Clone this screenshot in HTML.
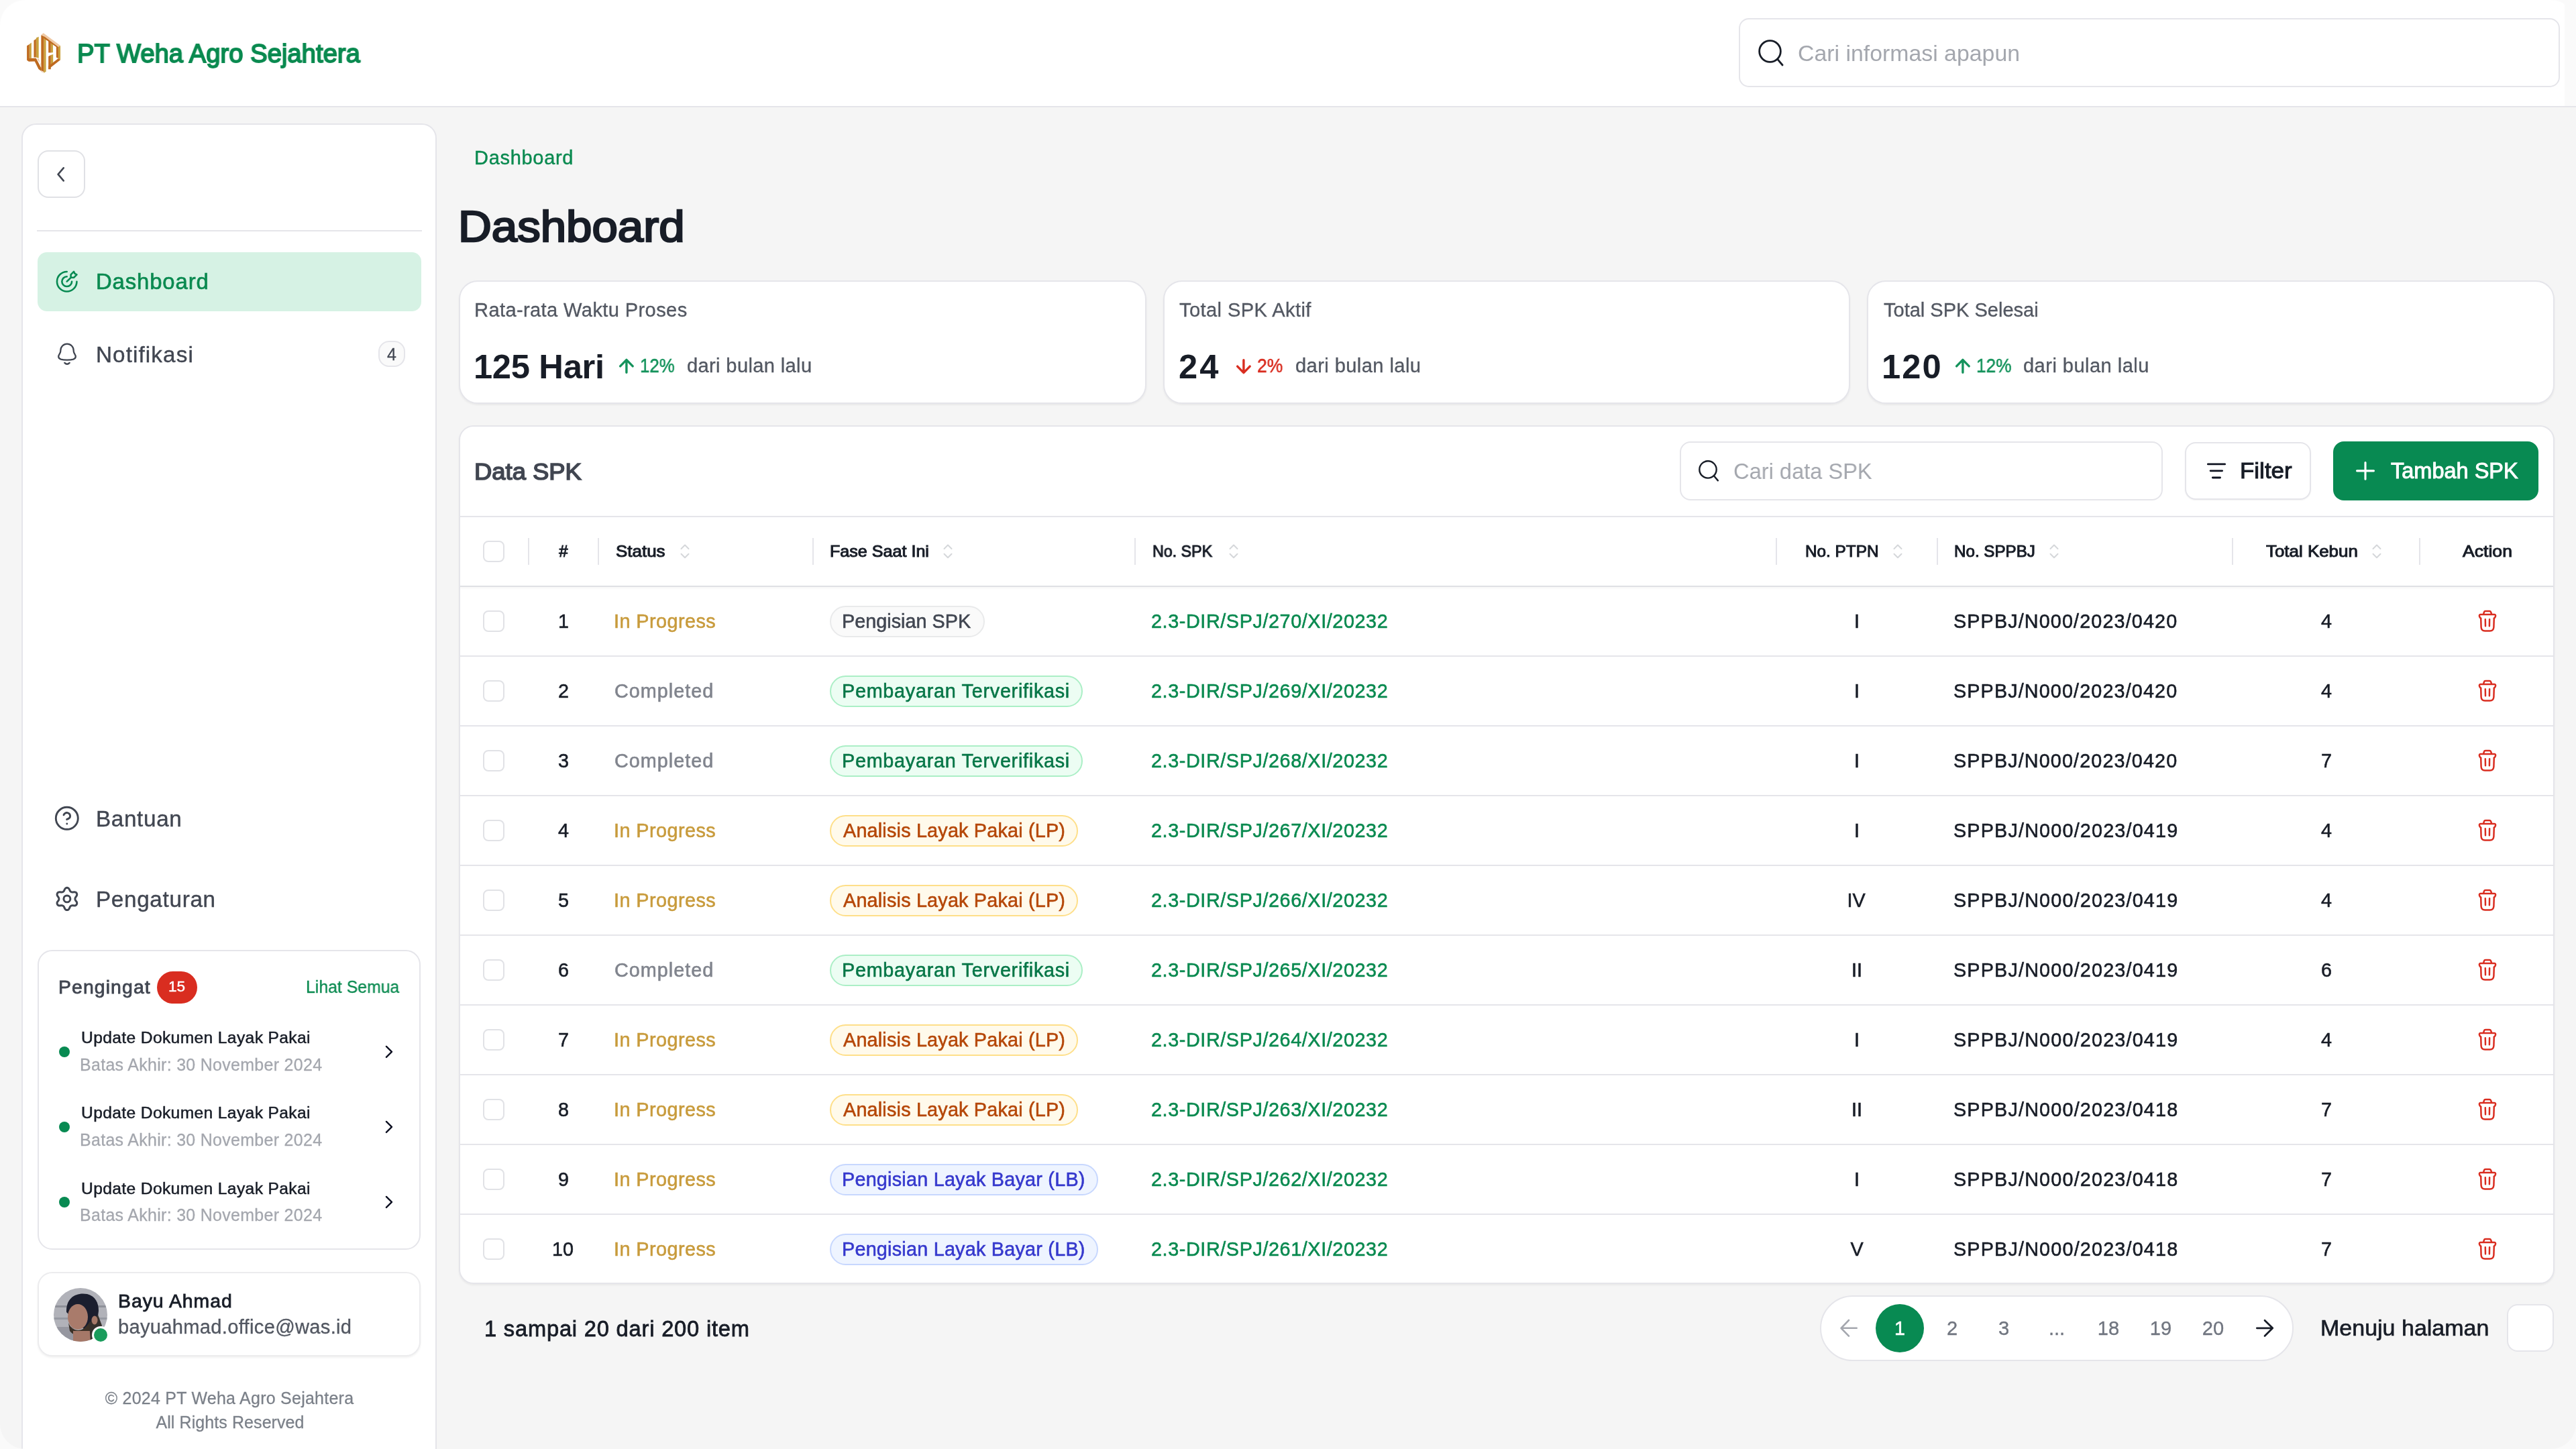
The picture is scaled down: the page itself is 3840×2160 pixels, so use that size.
<!DOCTYPE html>
<html><head><meta charset="utf-8"><title>Dashboard</title>
<style>
html,body{margin:0;padding:0;}
body{width:3840px;height:2160px;overflow:hidden;position:relative;background:#f5f5f5;font-family:"Liberation Sans", sans-serif;}
.t{position:absolute;white-space:nowrap;font-family:"Liberation Sans", sans-serif;will-change:transform;}
.b{position:absolute;box-sizing:border-box;}
.i{position:absolute;overflow:visible;}
</style></head><body>
<div class="b" style="left:0.00px;top:0.00px;width:3840.00px;height:160.00px;background:#fff;border-bottom:2px solid #e5e5ea;"></div>
<svg class="i" style="left:30.00px;top:40.00px;width:70.00px;height:75.00px;" viewBox="0 0 1352 1449" fill="none">
<g fill="#c9a13c">
<polygon points="265,500 325,455 325,905 265,905"/>
<polygon points="460,320 535,285 535,905 460,880"/>
<polygon points="680,290 745,320 745,1290 680,1330"/>
<polygon points="1100,545 1160,545 1160,950 1100,910"/>
<polygon points="885,440 945,480 945,740 885,745"/>
<polygon points="885,810 950,790 950,1050 885,1090"/>
</g>
<g fill="#bf6a1f">
<polygon points="195,545 265,500 265,905 460,905 610,1195 610,1290 680,1330 530,1215 420,995 250,1000 195,960"/>
<polygon points="395,390 460,350 460,880 395,880"/>
<polygon points="605,235 680,270 680,1300 605,1250"/>
<polygon points="680,265 745,290 1040,500 1100,580 1040,580 745,370 680,330"/>
<polygon points="1040,520 1100,580 1100,910 1040,880"/>
<polygon points="815,1130 1100,910 1160,950 815,1220"/>
<polygon points="815,400 885,440 885,745 815,745"/>
<polygon points="815,850 885,810 885,1220 815,1220"/>
</g>
<g fill="#efc9a4">
<polygon points="605,232 670,180 1160,540 1100,578 680,268"/>
<polygon points="480,920 540,920 605,1170 605,1080"/>
</g>
</svg>
<div class="t" style="left:114.60px;top:59.71px;font-size:39.67px;line-height:39.67px;color:#0a8a50;font-weight:400;letter-spacing:0.000px;-webkit-text-stroke:1.79px #0a8a50;transform:scaleX(0.9647);transform-origin:0 0;"><span id="logo_t">PT Weha Agro Sejahtera</span></div>
<div class="b" style="left:2592.00px;top:27.20px;width:1224.00px;height:102.80px;background:#fff;border:2px solid #e5e5ea;border-radius:15px;"></div>
<svg class="i" style="left:2616.00px;top:54.00px;width:48.00px;height:48.00px;" viewBox="0 0 48 48" fill="none"><circle cx="22.5" cy="22.45" r="15.85" stroke="#181d27" stroke-width="2.8"/><path d="M33.6 34.1 L41.1 43" stroke="#181d27" stroke-width="2.8" stroke-linecap="round"/></svg>
<div class="t" style="left:2679.90px;top:63.00px;font-size:33.81px;line-height:33.81px;color:#a4a7ae;font-weight:400;letter-spacing:0.000px;transform:scaleX(1.0012);transform-origin:0 0;"><span id="hs_ph">Cari informasi apapun</span></div>
<div class="b" style="left:32.00px;top:184.00px;width:619.00px;height:2076.00px;background:#fff;border:2px solid #e5e5ea;border-radius:22px;"></div>
<div class="b" style="left:56.00px;top:224.00px;width:71.00px;height:71.00px;background:#fff;border:2px solid #e0e1e5;border-radius:16px;"></div>
<svg class="i" style="left:70.00px;top:240.00px;width:40.00px;height:40.00px;" viewBox="0 0 40 40" fill="none"><path d="M24.7 10.35 L16.6 19.9 L24.7 29.4" stroke="#414651" stroke-width="2.6" stroke-linecap="round" stroke-linejoin="round"/></svg>
<div class="b" style="left:55.00px;top:343.00px;width:574.00px;height:2.00px;background:#e5e5ea;"></div>
<div class="b" style="left:56.00px;top:375.70px;width:572.00px;height:88.30px;background:#d6f2e4;border-radius:14px;"></div>
<svg class="i" style="left:82.30px;top:401.80px;width:35.40px;height:35.40px;" viewBox="0 0 24 24" fill="none"><path d="M16 8V5L19 2L20 4L22 5L19 8H16ZM16 8L12 12M22 12C22 17.5228 17.5228 22 12 22C6.47715 22 2 17.5228 2 12C2 6.47715 6.47715 2 12 2M17 12C17 14.7614 14.7614 17 12 17C9.23858 17 7 14.7614 7 12C7 9.23858 9.23858 7 12 7" stroke="#088a52" stroke-width="1.75" stroke-linecap="round" stroke-linejoin="round"/></svg>
<div class="t" style="left:143.00px;top:404.18px;font-size:32.86px;line-height:32.86px;color:#0a8a50;font-weight:400;letter-spacing:0.875px;-webkit-text-stroke:0.66px #0a8a50;"><span id="nav_dash">Dashboard</span></div>
<svg class="i" style="left:76.00px;top:504.00px;width:48.00px;height:48.00px;" viewBox="0 0 48 48" fill="none"><path d="M24 8.6 C18.6 8.6 14.3 13 14.3 18.5 L14.2 19.8 C14.1 21.2 13.4 22.6 12.6 23.8 C11.6 25.4 11.2 26.6 11.2 27.6 C11.2 29.6 12.8 31 14.8 31.7 C17.6 32.6 20.6 32.7 24 32.7 C27.4 32.7 30.4 32.6 33.2 31.7 C35.2 31 36.8 29.6 36.8 27.6 C36.8 26.6 36.4 25.4 35.4 23.8 C34.6 22.6 33.9 21.2 33.8 19.8 L33.7 18.5 C33.7 13 29.4 8.6 24 8.6 Z" stroke="#414651" stroke-width="2.3" stroke-linejoin="round"/><path d="M20.3 36.9 Q24 40.6 27.7 36.9" stroke="#414651" stroke-width="2.3" stroke-linecap="round"/></svg>
<div class="t" style="left:143.00px;top:511.50px;font-size:33.23px;line-height:33.23px;color:#414651;font-weight:400;letter-spacing:1.111px;-webkit-text-stroke:0.40px #414651;"><span id="nav_notif">Notifikasi</span></div>
<div class="b" style="left:564.00px;top:508.00px;width:40.00px;height:39.00px;background:#fafafa;border:2px solid #e5e5ea;border-radius:16px;"></div>
<div class="t" style="left:-16.00px;width:1200px;text-align:center;top:515.86px;font-size:24.93px;line-height:24.93px;color:#414651;font-weight:400;letter-spacing:0.000px;-webkit-text-stroke:0.30px #414651;"><span id="badge4">4</span></div>
<svg class="i" style="left:80.20px;top:1200.20px;width:39.60px;height:39.60px;" viewBox="0 0 24 24" fill="none"><path d="M9.09 9C9.3251 8.33167 9.78915 7.76811 10.4 7.40913C11.0108 7.05016 11.7289 6.91894 12.4272 7.03871C13.1255 7.15849 13.7588 7.52152 14.2151 8.06353C14.6713 8.60553 14.9211 9.29152 14.92 10C14.92 12 11.92 13 11.92 13M12 17H12.01M22 12C22 17.5228 17.5228 22 12 22C6.47715 22 2 17.5228 2 12C2 6.47715 6.47715 2 12 2C17.5228 2 22 6.47715 22 12Z" stroke="#414651" stroke-width="1.75" stroke-linecap="round" stroke-linejoin="round"/></svg>
<div class="t" style="left:143.00px;top:1203.91px;font-size:33.23px;line-height:33.23px;color:#414651;font-weight:400;letter-spacing:0.667px;-webkit-text-stroke:0.40px #414651;"><span id="nav_help">Bantuan</span></div>
<svg class="i" style="left:79.90px;top:1319.80px;width:39.80px;height:39.80px;" viewBox="0 0 24 24" fill="none"><path d="M9.3951 19.3711L9.97955 20.6856C10.1533 21.0768 10.4368 21.4093 10.7958 21.6426C11.1547 21.8759 11.5737 22.0001 12.0018 22C12.4299 22.0001 12.8488 21.8759 13.2078 21.6426C13.5667 21.4093 13.8503 21.0768 14.024 20.6856L14.6084 19.3711C14.8165 18.9047 15.1664 18.5159 15.6084 18.26C16.0532 18.0034 16.5678 17.8941 17.0784 17.9478L18.5084 18.1C18.9341 18.145 19.3637 18.0656 19.7451 17.8713C20.1265 17.6771 20.4434 17.3763 20.6573 17.0056C20.8715 16.635 20.9735 16.2103 20.9511 15.7829C20.9286 15.3555 20.7825 14.9438 20.5307 14.5978L19.684 13.4344C19.3825 13.0171 19.2214 12.5148 19.224 12C19.2239 11.4866 19.3865 10.9864 19.6884 10.5711L20.5351 9.40778C20.787 9.06175 20.933 8.65007 20.9555 8.22267C20.978 7.79528 20.8759 7.37054 20.6618 7C20.4479 6.62923 20.131 6.32849 19.7496 6.13423C19.3681 5.93997 18.9386 5.86053 18.5129 5.90556L17.0829 6.05778C16.5722 6.11141 16.0577 6.00212 15.6129 5.74556C15.17 5.48825 14.82 5.09736 14.6129 4.62889L14.024 3.31444C13.8503 2.92317 13.5667 2.59072 13.2078 2.3574C12.8488 2.12408 12.4299 1.99993 12.0018 2C11.5737 1.99993 11.1547 2.12408 10.7958 2.3574C10.4368 2.59072 10.1533 2.92317 9.97955 3.31444L9.3951 4.62889C9.18803 5.09736 8.83798 5.48825 8.3951 5.74556C7.95032 6.00212 7.43577 6.11141 6.9251 6.05778L5.49066 5.90556C5.06499 5.86053 4.6354 5.93997 4.25397 6.13423C3.87255 6.32849 3.55567 6.62923 3.34177 7C3.12759 7.37054 3.02555 7.79528 3.04804 8.22267C3.07052 8.65007 3.21656 9.06175 3.46844 9.40778L4.3151 10.5711C4.61704 10.9864 4.77964 11.4866 4.77955 12C4.77964 12.5134 4.61704 13.0137 4.3151 13.4289L3.46844 14.5922C3.21656 14.9382 3.07052 15.3499 3.04804 15.7773C3.02555 16.2047 3.12759 16.6295 3.34177 17C3.55589 17.3706 3.8728 17.6712 4.25417 17.8654C4.63554 18.0596 5.06502 18.1392 5.49066 18.0944L6.92066 17.9422C7.43133 17.8886 7.94587 17.9979 8.39066 18.2544C8.83519 18.511 9.18687 18.902 9.3951 19.3711Z" stroke="#414651" stroke-width="1.8" stroke-linecap="round" stroke-linejoin="round"/><circle cx="12" cy="12" r="3" stroke="#414651" stroke-width="1.8"/></svg>
<div class="t" style="left:143.00px;top:1323.91px;font-size:33.23px;line-height:33.23px;color:#414651;font-weight:400;letter-spacing:0.698px;-webkit-text-stroke:0.40px #414651;"><span id="nav_set">Pengaturan</span></div>
<div class="b" style="left:56.00px;top:1416.00px;width:571.00px;height:447.00px;background:#fff;border:2px solid #e5e5ea;border-radius:22px;"></div>
<div class="t" style="left:87.00px;top:1456.79px;font-size:28.35px;line-height:28.35px;color:#414651;font-weight:400;letter-spacing:1.125px;-webkit-text-stroke:0.85px #414651;"><span id="ping_t">Pengingat</span></div>
<div class="b" style="left:234.00px;top:1448.00px;width:59.50px;height:47.50px;background:#d92d20;border-radius:24px;"></div>
<div class="t" style="left:251.00px;top:1460.38px;font-size:22.59px;line-height:22.59px;color:#fff;font-weight:400;letter-spacing:0.000px;-webkit-text-stroke:0.45px #fff;"><span id="ping_badge">15</span></div>
<div class="t" style="left:455.90px;top:1458.75px;font-size:24.93px;line-height:24.93px;color:#0a8a50;font-weight:400;letter-spacing:0.000px;-webkit-text-stroke:0.30px #0a8a50;transform:scaleX(0.9954);transform-origin:0 0;"><span id="ping_all">Lihat Semua</span></div>
<svg class="i" style="left:88.00px;top:1559.60px;width:16.00px;height:16.00px;" viewBox="0 0 16 16" fill="none"><circle cx="8" cy="8" r="8" fill="#088a52"/></svg>
<div class="t" style="left:120.60px;top:1535.26px;font-size:24.64px;line-height:24.64px;color:#181d27;font-weight:400;letter-spacing:0.356px;-webkit-text-stroke:0.49px #181d27;"><span id="rem0_t">Update Dokumen Layak Pakai</span></div>
<div class="t" style="left:119.40px;top:1574.66px;font-size:24.93px;line-height:24.93px;color:#a4a7ae;font-weight:400;letter-spacing:0.327px;-webkit-text-stroke:0.30px #a4a7ae;"><span id="rem0_s">Batas Akhir: 30 November 2024</span></div>
<svg class="i" style="left:560.00px;top:1548.00px;width:40.00px;height:40.00px;" viewBox="0 0 40 40" fill="none"><path d="M15.9 11.9 L24 19.9 L15.9 27.9" stroke="#0d1021" stroke-width="2.4" stroke-linecap="round" stroke-linejoin="round"/></svg>
<svg class="i" style="left:88.00px;top:1671.80px;width:16.00px;height:16.00px;" viewBox="0 0 16 16" fill="none"><circle cx="8" cy="8" r="8" fill="#088a52"/></svg>
<div class="t" style="left:120.60px;top:1647.47px;font-size:24.64px;line-height:24.64px;color:#181d27;font-weight:400;letter-spacing:0.356px;-webkit-text-stroke:0.49px #181d27;"><span id="rem1_t">Update Dokumen Layak Pakai</span></div>
<div class="t" style="left:119.40px;top:1686.86px;font-size:24.93px;line-height:24.93px;color:#a4a7ae;font-weight:400;letter-spacing:0.327px;-webkit-text-stroke:0.30px #a4a7ae;"><span id="rem1_s">Batas Akhir: 30 November 2024</span></div>
<svg class="i" style="left:560.00px;top:1660.20px;width:40.00px;height:40.00px;" viewBox="0 0 40 40" fill="none"><path d="M15.9 11.9 L24 19.9 L15.9 27.9" stroke="#0d1021" stroke-width="2.4" stroke-linecap="round" stroke-linejoin="round"/></svg>
<svg class="i" style="left:88.00px;top:1784.00px;width:16.00px;height:16.00px;" viewBox="0 0 16 16" fill="none"><circle cx="8" cy="8" r="8" fill="#088a52"/></svg>
<div class="t" style="left:120.60px;top:1759.67px;font-size:24.64px;line-height:24.64px;color:#181d27;font-weight:400;letter-spacing:0.356px;-webkit-text-stroke:0.49px #181d27;"><span id="rem2_t">Update Dokumen Layak Pakai</span></div>
<div class="t" style="left:119.40px;top:1799.06px;font-size:24.93px;line-height:24.93px;color:#a4a7ae;font-weight:400;letter-spacing:0.327px;-webkit-text-stroke:0.30px #a4a7ae;"><span id="rem2_s">Batas Akhir: 30 November 2024</span></div>
<svg class="i" style="left:560.00px;top:1772.40px;width:40.00px;height:40.00px;" viewBox="0 0 40 40" fill="none"><path d="M15.9 11.9 L24 19.9 L15.9 27.9" stroke="#0d1021" stroke-width="2.4" stroke-linecap="round" stroke-linejoin="round"/></svg>
<div class="b" style="left:56.00px;top:1896.00px;width:571.00px;height:126.00px;background:#fff;border:2px solid #ececee;border-radius:22px;box-shadow:0 2px 3px rgba(10,13,18,0.06);"></div>
<svg class="i" style="left:80.00px;top:1920.00px;width:80.00px;height:80.00px;" viewBox="0 0 80 80" fill="none">
<defs><clipPath id="avc"><circle cx="40" cy="40" r="40"/></clipPath></defs>
<g clip-path="url(#avc)">
<rect width="80" height="80" fill="#b1b2b9"/>
<rect x="0" y="26" width="80" height="3" fill="#7f818b" opacity="0.7"/>
<rect x="0" y="44" width="80" height="3" fill="#868892" opacity="0.6"/>
<rect x="0" y="58" width="30" height="22" fill="#8a8c95" opacity="0.7"/>
<path d="M19 36 C18 14 34 6 50 9 C62 12 67 22 67 34 L64 58 L46 62 Z" fill="#1b1e2e"/>
<ellipse cx="36" cy="43" rx="15" ry="19" fill="#a97b6b"/>
<path d="M22 52 C28 66 44 68 54 50 L60 70 C46 76 30 72 24 64 Z" fill="#3b3026"/>
<rect x="29" y="64" width="27" height="18" fill="#a57868"/>
<path d="M53 52 L66 40 L72 56 L62 80 L55 80 Z" fill="#35302c"/>
<ellipse cx="61" cy="48" rx="4.5" ry="6.5" fill="#a57868"/>
</g></svg>
<svg class="i" style="left:136.00px;top:1976.00px;width:28.00px;height:28.00px;" viewBox="0 0 28 28" fill="none"><circle cx="14" cy="14" r="13" fill="#fff"/><circle cx="14" cy="14" r="10" fill="#1a9c5c"/></svg>
<div class="t" style="left:176.00px;top:1924.88px;font-size:28.35px;line-height:28.35px;color:#181d27;font-weight:400;letter-spacing:1.000px;-webkit-text-stroke:0.85px #181d27;"><span id="user_n">Bayu Ahmad</span></div>
<div class="t" style="left:176.00px;top:1964.33px;font-size:29.08px;line-height:29.08px;color:#535862;font-weight:400;letter-spacing:0.320px;-webkit-text-stroke:0.35px #535862;"><span id="user_e">bayuahmad.office@was.id</span></div>
<div class="t" style="left:-257.65px;width:1200px;text-align:center;top:2072.36px;font-size:24.93px;line-height:24.93px;color:#7b8089;font-weight:400;letter-spacing:0.286px;-webkit-text-stroke:0.30px #7b8089;"><span id="foot1">&copy; 2024 PT Weha Agro Sejahtera</span></div>
<div class="t" style="left:-257.39px;width:1200px;text-align:center;top:2108.36px;font-size:24.93px;line-height:24.93px;color:#7b8089;font-weight:400;letter-spacing:0.123px;-webkit-text-stroke:0.30px #7b8089;"><span id="foot2">All Rights Reserved</span></div>
<div class="t" style="left:707.30px;top:220.99px;font-size:28.96px;line-height:28.96px;color:#0a8a50;font-weight:400;letter-spacing:0.725px;-webkit-text-stroke:0.43px #0a8a50;"><span id="bc">Dashboard</span></div>
<div class="t" style="left:683.00px;top:306.46px;font-size:64.00px;line-height:64.00px;color:#181d27;font-weight:400;letter-spacing:0.000px;-webkit-text-stroke:2.50px #181d27;transform:scaleX(1.0783);transform-origin:0 0;"><span id="title">Dashboard</span></div>
<div class="b" style="left:684.00px;top:418.00px;width:1024.70px;height:184.00px;background:#fff;border:2px solid #e5e5ea;border-radius:28px;box-shadow:0 2px 3px rgba(10,13,18,0.05);"></div>
<div class="b" style="left:1733.70px;top:418.00px;width:1024.60px;height:184.00px;background:#fff;border:2px solid #e5e5ea;border-radius:28px;box-shadow:0 2px 3px rgba(10,13,18,0.05);"></div>
<div class="b" style="left:2783.30px;top:418.00px;width:1024.70px;height:184.00px;background:#fff;border:2px solid #e5e5ea;border-radius:28px;box-shadow:0 2px 3px rgba(10,13,18,0.05);"></div>
<div class="t" style="left:707.00px;top:448.04px;font-size:29.08px;line-height:29.08px;color:#535862;font-weight:400;letter-spacing:0.380px;-webkit-text-stroke:0.35px #535862;"><span id="s1_l">Rata-rata Waktu Proses</span></div>
<div class="t" style="left:706.00px;top:521.91px;font-size:50.70px;line-height:50.70px;color:#181d27;font-weight:700;letter-spacing:-0.325px;"><span id="s1_v">125 Hari</span></div>
<svg class="i" style="left:916.00px;top:528.00px;width:36.00px;height:36.00px;" viewBox="0 0 36 36" fill="none"><path d="M8.6 17.9 L17.9 8.4 L27.2 17.9 M17.9 8.6 V27.3" stroke="#15935c" stroke-width="3.4" stroke-linecap="round" stroke-linejoin="round"/></svg>
<div class="t" style="left:954.00px;top:531.22px;font-size:28.75px;line-height:28.75px;color:#15935c;font-weight:400;letter-spacing:0.000px;-webkit-text-stroke:0.58px #15935c;transform:scaleX(0.8974);transform-origin:0 0;"><span id="s1_p">12%</span></div>
<div class="t" style="left:1024.00px;top:531.33px;font-size:29.08px;line-height:29.08px;color:#535862;font-weight:400;letter-spacing:0.358px;-webkit-text-stroke:0.35px #535862;"><span id="s1_d">dari bulan lalu</span></div>
<div class="t" style="left:1758.00px;top:448.04px;font-size:29.08px;line-height:29.08px;color:#535862;font-weight:400;letter-spacing:0.404px;-webkit-text-stroke:0.35px #535862;"><span id="s2_l">Total SPK Aktif</span></div>
<div class="t" style="left:1757.00px;top:521.91px;font-size:50.70px;line-height:50.70px;color:#181d27;font-weight:700;letter-spacing:3.000px;"><span id="s2_v">24</span></div>
<svg class="i" style="left:1835.50px;top:528.00px;width:36.00px;height:36.00px;" viewBox="0 0 36 36" fill="none"><path d="M8.6 18.1 L17.9 27.6 L27.2 18.1 M17.9 27.4 V8.7" stroke="#d92d20" stroke-width="3.4" stroke-linecap="round" stroke-linejoin="round"/></svg>
<div class="t" style="left:1873.60px;top:531.22px;font-size:28.75px;line-height:28.75px;color:#d92d20;font-weight:400;letter-spacing:0.000px;-webkit-text-stroke:0.58px #d92d20;transform:scaleX(0.9183);transform-origin:0 0;"><span id="s2_p">2%</span></div>
<div class="t" style="left:1931.00px;top:531.33px;font-size:29.08px;line-height:29.08px;color:#535862;font-weight:400;letter-spacing:0.421px;-webkit-text-stroke:0.35px #535862;"><span id="s2_d">dari bulan lalu</span></div>
<div class="t" style="left:2808.00px;top:448.04px;font-size:29.08px;line-height:29.08px;color:#535862;font-weight:400;letter-spacing:-0.030px;-webkit-text-stroke:0.35px #535862;"><span id="s3_l">Total SPK Selesai</span></div>
<div class="t" style="left:2805.00px;top:521.91px;font-size:50.70px;line-height:50.70px;color:#181d27;font-weight:700;letter-spacing:2.100px;"><span id="s3_v">120</span></div>
<svg class="i" style="left:2907.50px;top:528.00px;width:36.00px;height:36.00px;" viewBox="0 0 36 36" fill="none"><path d="M8.6 17.9 L17.9 8.4 L27.2 17.9 M17.9 8.6 V27.3" stroke="#15935c" stroke-width="3.4" stroke-linecap="round" stroke-linejoin="round"/></svg>
<div class="t" style="left:2946.00px;top:531.22px;font-size:28.75px;line-height:28.75px;color:#15935c;font-weight:400;letter-spacing:0.000px;-webkit-text-stroke:0.58px #15935c;transform:scaleX(0.9126);transform-origin:0 0;"><span id="s3_p">12%</span></div>
<div class="t" style="left:3016.00px;top:531.33px;font-size:29.08px;line-height:29.08px;color:#535862;font-weight:400;letter-spacing:0.453px;-webkit-text-stroke:0.35px #535862;"><span id="s3_d">dari bulan lalu</span></div>
<div class="b" style="left:684.00px;top:634.00px;width:3124.00px;height:1280.00px;background:#fff;border:2px solid #e5e5ea;border-radius:22px;box-shadow:0 2px 3px rgba(10,13,18,0.05);"></div>
<div class="t" style="left:706.90px;top:686.20px;font-size:35.71px;line-height:35.71px;color:#414651;font-weight:400;letter-spacing:0.000px;-webkit-text-stroke:1.61px #414651;transform:scaleX(1.0196);transform-origin:0 0;"><span id="data_t">Data SPK</span></div>
<div class="b" style="left:2504.00px;top:658.00px;width:719.50px;height:87.50px;background:#fff;border:2px solid #e5e5ea;border-radius:16px;"></div>
<svg class="i" style="left:2527.80px;top:681.80px;width:38.40px;height:38.40px;" viewBox="0 0 48 48" fill="none"><circle cx="22.5" cy="22.45" r="15.85" stroke="#181d27" stroke-width="3"/><path d="M33.6 34.1 L41.1 43" stroke="#181d27" stroke-width="3" stroke-linecap="round"/></svg>
<div class="t" style="left:2584.20px;top:686.00px;font-size:33.81px;line-height:33.81px;color:#a4a7ae;font-weight:400;letter-spacing:0.000px;transform:scaleX(0.9653);transform-origin:0 0;"><span id="sspk_ph">Cari data SPK</span></div>
<div class="b" style="left:3257.00px;top:658.60px;width:188.00px;height:86.80px;background:#fff;border:2px solid #e5e5ea;border-radius:16px;box-shadow:0 1px 2px rgba(10,13,18,0.05);"></div>
<svg class="i" style="left:3280.00px;top:678.00px;width:48.00px;height:48.00px;" viewBox="0 0 48 48" fill="none"><path d="M11.4 13.9 H36.6 M15.1 23.85 H32.6 M18.4 33.95 H29.5" stroke="#0e1220" stroke-width="2.9" stroke-linecap="round"/></svg>
<div class="t" style="left:3339.00px;top:686.32px;font-size:32.40px;line-height:32.40px;color:#181d27;font-weight:400;letter-spacing:0.000px;-webkit-text-stroke:0.97px #181d27;transform:scaleX(1.0790);transform-origin:0 0;"><span id="filter_t">Filter</span></div>
<div class="b" style="left:3478.00px;top:658.00px;width:306.00px;height:87.60px;background:#088a52;border-radius:16px;"></div>
<svg class="i" style="left:3502.00px;top:678.00px;width:48.00px;height:48.00px;" viewBox="0 0 48 48" fill="none"><path d="M24 11.5 V36.2 M11.5 23.85 H36.5" stroke="#fff" stroke-width="3.1" stroke-linecap="round"/></svg>
<div class="t" style="left:3563.50px;top:686.32px;font-size:32.40px;line-height:32.40px;color:#fff;font-weight:400;letter-spacing:0.000px;-webkit-text-stroke:0.97px #fff;transform:scaleX(1.0033);transform-origin:0 0;"><span id="tambah_t">Tambah SPK</span></div>
<div class="b" style="left:686.00px;top:769.00px;width:3120.00px;height:2.00px;background:#e5e5ea;"></div>
<div class="b" style="left:686.00px;top:872.50px;width:3120.00px;height:2.00px;background:#dfe0e4;box-shadow:0 2px 3px rgba(10,13,18,0.05);"></div>
<div class="b" style="left:787.00px;top:802.00px;width:2.00px;height:40.00px;background:#e5e5ea;"></div>
<div class="b" style="left:891.00px;top:802.00px;width:2.00px;height:40.00px;background:#e5e5ea;"></div>
<div class="b" style="left:1211.00px;top:802.00px;width:2.00px;height:40.00px;background:#e5e5ea;"></div>
<div class="b" style="left:1691.00px;top:802.00px;width:2.00px;height:40.00px;background:#e5e5ea;"></div>
<div class="b" style="left:2647.00px;top:802.00px;width:2.00px;height:40.00px;background:#e5e5ea;"></div>
<div class="b" style="left:2886.50px;top:802.00px;width:2.00px;height:40.00px;background:#e5e5ea;"></div>
<div class="b" style="left:3327.00px;top:802.00px;width:2.00px;height:40.00px;background:#e5e5ea;"></div>
<div class="b" style="left:3606.00px;top:802.00px;width:2.00px;height:40.00px;background:#e5e5ea;"></div>
<div class="b" style="left:720.00px;top:806.00px;width:32.00px;height:32.00px;background:#fff;border:2px solid #e1e2e6;border-radius:8px;"></div>
<div class="t" style="left:240.10px;width:1200px;text-align:center;top:809.50px;font-size:23.90px;line-height:23.90px;color:#181d27;font-weight:400;letter-spacing:0.000px;-webkit-text-stroke:1.00px #181d27;"><span id="h_num">#</span></div>
<div class="t" style="left:917.60px;top:809.50px;font-size:23.90px;line-height:23.90px;color:#181d27;font-weight:400;letter-spacing:0.000px;-webkit-text-stroke:1.00px #181d27;transform:scaleX(1.0859);transform-origin:0 0;"><span id="h_status">Status</span></div>
<svg class="i" style="left:999.75px;top:800.00px;width:40.00px;height:40.00px;" viewBox="0 0 40 40" fill="none"><path d="M15.5 18 L21 12.5 L26.5 18 M15.5 25.8 L21 31.3 L26.5 25.8" stroke="#d5d7da" stroke-width="2" stroke-linecap="round" stroke-linejoin="round"/></svg>
<div class="t" style="left:1237.00px;top:809.50px;font-size:23.90px;line-height:23.90px;color:#181d27;font-weight:400;letter-spacing:0.000px;-webkit-text-stroke:1.00px #181d27;transform:scaleX(1.0508);transform-origin:0 0;"><span id="h_fase">Fase Saat Ini</span></div>
<svg class="i" style="left:1392.00px;top:800.00px;width:40.00px;height:40.00px;" viewBox="0 0 40 40" fill="none"><path d="M15.5 18 L21 12.5 L26.5 18 M15.5 25.8 L21 31.3 L26.5 25.8" stroke="#d5d7da" stroke-width="2" stroke-linecap="round" stroke-linejoin="round"/></svg>
<div class="t" style="left:1718.00px;top:809.50px;font-size:23.90px;line-height:23.90px;color:#181d27;font-weight:400;letter-spacing:0.000px;-webkit-text-stroke:1.00px #181d27;transform:scaleX(0.9723);transform-origin:0 0;"><span id="h_spk">No. SPK</span></div>
<svg class="i" style="left:1818.00px;top:800.00px;width:40.00px;height:40.00px;" viewBox="0 0 40 40" fill="none"><path d="M15.5 18 L21 12.5 L26.5 18 M15.5 25.8 L21 31.3 L26.5 25.8" stroke="#d5d7da" stroke-width="2" stroke-linecap="round" stroke-linejoin="round"/></svg>
<div class="t" style="left:2691.10px;top:809.50px;font-size:23.90px;line-height:23.90px;color:#181d27;font-weight:400;letter-spacing:0.000px;-webkit-text-stroke:1.00px #181d27;transform:scaleX(1.0180);transform-origin:0 0;"><span id="h_ptpn">No. PTPN</span></div>
<svg class="i" style="left:2807.80px;top:800.00px;width:40.00px;height:40.00px;" viewBox="0 0 40 40" fill="none"><path d="M15.5 18 L21 12.5 L26.5 18 M15.5 25.8 L21 31.3 L26.5 25.8" stroke="#d5d7da" stroke-width="2" stroke-linecap="round" stroke-linejoin="round"/></svg>
<div class="t" style="left:2913.00px;top:809.50px;font-size:23.90px;line-height:23.90px;color:#181d27;font-weight:400;letter-spacing:0.000px;-webkit-text-stroke:1.00px #181d27;transform:scaleX(1.0122);transform-origin:0 0;"><span id="h_sppbj">No. SPPBJ</span></div>
<svg class="i" style="left:3041.40px;top:800.00px;width:40.00px;height:40.00px;" viewBox="0 0 40 40" fill="none"><path d="M15.5 18 L21 12.5 L26.5 18 M15.5 25.8 L21 31.3 L26.5 25.8" stroke="#d5d7da" stroke-width="2" stroke-linecap="round" stroke-linejoin="round"/></svg>
<div class="t" style="left:3377.60px;top:809.50px;font-size:23.90px;line-height:23.90px;color:#181d27;font-weight:400;letter-spacing:0.000px;-webkit-text-stroke:1.00px #181d27;transform:scaleX(1.0842);transform-origin:0 0;"><span id="h_kebun">Total Kebun</span></div>
<svg class="i" style="left:3522.00px;top:800.00px;width:40.00px;height:40.00px;" viewBox="0 0 40 40" fill="none"><path d="M15.5 18 L21 12.5 L26.5 18 M15.5 25.8 L21 31.3 L26.5 25.8" stroke="#d5d7da" stroke-width="2" stroke-linecap="round" stroke-linejoin="round"/></svg>
<div class="t" style="left:3108.40px;width:1200px;text-align:center;top:809.50px;font-size:23.90px;line-height:23.90px;color:#181d27;font-weight:400;letter-spacing:0.000px;-webkit-text-stroke:1.00px #181d27;transform:scaleX(1.1118);transform-origin:50% 0;"><span id="h_action">Action</span></div>
<div class="b" style="left:686.00px;top:976.50px;width:3120.00px;height:2.00px;background:#e5e5ea;"></div>
<div class="b" style="left:720.00px;top:910.00px;width:32.00px;height:32.00px;background:#fff;border:2px solid #e1e2e6;border-radius:8px;"></div>
<div class="t" style="left:240.00px;width:1200px;text-align:center;top:911.53px;font-size:28.75px;line-height:28.75px;color:#181d27;font-weight:400;letter-spacing:0.000px;-webkit-text-stroke:0.58px #181d27;"><span id="r0_num">1</span></div>
<div class="t" style="left:914.50px;top:911.53px;font-size:28.75px;line-height:28.75px;color:#c89b3c;font-weight:400;letter-spacing:0.460px;-webkit-text-stroke:0.58px #c89b3c;"><span id="r0_st">In Progress</span></div>
<div class="b" style="left:1236.50px;top:902.50px;width:231.20px;height:47.00px;background:#fafafa;border:2px solid #e9eaeb;border-radius:24px;"></div>
<div class="t" style="left:1255.00px;top:911.53px;font-size:28.75px;line-height:28.75px;color:#414651;font-weight:400;letter-spacing:0.022px;-webkit-text-stroke:0.58px #414651;"><span id="r0_pill">Pengisian SPK</span></div>
<div class="t" style="left:1716.40px;top:911.53px;font-size:28.75px;line-height:28.75px;color:#0a8a50;font-weight:400;letter-spacing:0.603px;-webkit-text-stroke:0.58px #0a8a50;"><span id="r0_spk">2.3-DIR/SPJ/270/XI/20232</span></div>
<div class="t" style="left:2168.00px;width:1200px;text-align:center;top:911.53px;font-size:28.75px;line-height:28.75px;color:#181d27;font-weight:400;letter-spacing:0.000px;-webkit-text-stroke:0.58px #181d27;"><span id="r0_ptpn">I</span></div>
<div class="t" style="left:2911.50px;top:911.53px;font-size:28.75px;line-height:28.75px;color:#181d27;font-weight:400;letter-spacing:1.131px;-webkit-text-stroke:0.58px #181d27;"><span id="r0_sppbj">SPPBJ/N000/2023/0420</span></div>
<div class="t" style="left:2868.00px;width:1200px;text-align:center;top:911.53px;font-size:28.75px;line-height:28.75px;color:#181d27;font-weight:400;letter-spacing:0.000px;-webkit-text-stroke:0.58px #181d27;"><span id="r0_keb">4</span></div>
<svg class="i" style="left:3684.00px;top:902.00px;width:48.00px;height:48.00px;" viewBox="0 0 48 48" fill="none"><path d="M18.2 13.2 L18.9 10.6 Q19.4 9.1 21 9.1 L27 9.1 Q28.6 9.1 29.2 10.6 L30 13.2" stroke="#d92d20" stroke-width="2.5" stroke-linejoin="round" stroke-linecap="round"/><path d="M14 13.9 L34 13.9 Q36.6 14 36 16.6 Q35.5 18.6 34 19.8 M14 13.9 Q11.4 14 12 16.6 Q12.5 18.6 14 19.8" stroke="#d92d20" stroke-width="2.5" stroke-linecap="round" stroke-linejoin="round"/><path d="M14.2 19.8 L14.6 33 Q15 38.4 20.2 38.5 L27.8 38.5 Q33 38.4 33.4 33 L33.8 19.8" stroke="#d92d20" stroke-width="2.5" stroke-linecap="round" stroke-linejoin="round"/><path d="M20.8 21.2 L21 31.3 M27.1 21.2 L26.9 31.3" stroke="#d92d20" stroke-width="2.5" stroke-linecap="round"/></svg>
<div class="b" style="left:686.00px;top:1080.50px;width:3120.00px;height:2.00px;background:#e5e5ea;"></div>
<div class="b" style="left:720.00px;top:1014.00px;width:32.00px;height:32.00px;background:#fff;border:2px solid #e1e2e6;border-radius:8px;"></div>
<div class="t" style="left:240.00px;width:1200px;text-align:center;top:1015.53px;font-size:28.75px;line-height:28.75px;color:#181d27;font-weight:400;letter-spacing:0.000px;-webkit-text-stroke:0.58px #181d27;"><span id="r1_num">2</span></div>
<div class="t" style="left:915.50px;top:1015.53px;font-size:28.75px;line-height:28.75px;color:#80848d;font-weight:400;letter-spacing:1.025px;-webkit-text-stroke:0.58px #80848d;"><span id="r1_st">Completed</span></div>
<div class="b" style="left:1236.50px;top:1006.50px;width:377.00px;height:47.00px;background:#ecfdf3;border:2px solid #abefc6;border-radius:24px;"></div>
<div class="t" style="left:1255.00px;top:1015.53px;font-size:28.75px;line-height:28.75px;color:#067647;font-weight:400;letter-spacing:0.739px;-webkit-text-stroke:0.58px #067647;"><span id="r1_pill">Pembayaran Terverifikasi</span></div>
<div class="t" style="left:1716.40px;top:1015.53px;font-size:28.75px;line-height:28.75px;color:#0a8a50;font-weight:400;letter-spacing:0.603px;-webkit-text-stroke:0.58px #0a8a50;"><span id="r1_spk">2.3-DIR/SPJ/269/XI/20232</span></div>
<div class="t" style="left:2168.00px;width:1200px;text-align:center;top:1015.53px;font-size:28.75px;line-height:28.75px;color:#181d27;font-weight:400;letter-spacing:0.000px;-webkit-text-stroke:0.58px #181d27;"><span id="r1_ptpn">I</span></div>
<div class="t" style="left:2911.50px;top:1015.53px;font-size:28.75px;line-height:28.75px;color:#181d27;font-weight:400;letter-spacing:1.131px;-webkit-text-stroke:0.58px #181d27;"><span id="r1_sppbj">SPPBJ/N000/2023/0420</span></div>
<div class="t" style="left:2868.00px;width:1200px;text-align:center;top:1015.53px;font-size:28.75px;line-height:28.75px;color:#181d27;font-weight:400;letter-spacing:0.000px;-webkit-text-stroke:0.58px #181d27;"><span id="r1_keb">4</span></div>
<svg class="i" style="left:3684.00px;top:1006.00px;width:48.00px;height:48.00px;" viewBox="0 0 48 48" fill="none"><path d="M18.2 13.2 L18.9 10.6 Q19.4 9.1 21 9.1 L27 9.1 Q28.6 9.1 29.2 10.6 L30 13.2" stroke="#d92d20" stroke-width="2.5" stroke-linejoin="round" stroke-linecap="round"/><path d="M14 13.9 L34 13.9 Q36.6 14 36 16.6 Q35.5 18.6 34 19.8 M14 13.9 Q11.4 14 12 16.6 Q12.5 18.6 14 19.8" stroke="#d92d20" stroke-width="2.5" stroke-linecap="round" stroke-linejoin="round"/><path d="M14.2 19.8 L14.6 33 Q15 38.4 20.2 38.5 L27.8 38.5 Q33 38.4 33.4 33 L33.8 19.8" stroke="#d92d20" stroke-width="2.5" stroke-linecap="round" stroke-linejoin="round"/><path d="M20.8 21.2 L21 31.3 M27.1 21.2 L26.9 31.3" stroke="#d92d20" stroke-width="2.5" stroke-linecap="round"/></svg>
<div class="b" style="left:686.00px;top:1184.50px;width:3120.00px;height:2.00px;background:#e5e5ea;"></div>
<div class="b" style="left:720.00px;top:1118.00px;width:32.00px;height:32.00px;background:#fff;border:2px solid #e1e2e6;border-radius:8px;"></div>
<div class="t" style="left:240.00px;width:1200px;text-align:center;top:1119.53px;font-size:28.75px;line-height:28.75px;color:#181d27;font-weight:400;letter-spacing:0.000px;-webkit-text-stroke:0.58px #181d27;"><span id="r2_num">3</span></div>
<div class="t" style="left:915.50px;top:1119.53px;font-size:28.75px;line-height:28.75px;color:#80848d;font-weight:400;letter-spacing:1.025px;-webkit-text-stroke:0.58px #80848d;"><span id="r2_st">Completed</span></div>
<div class="b" style="left:1236.50px;top:1110.50px;width:377.00px;height:47.00px;background:#ecfdf3;border:2px solid #abefc6;border-radius:24px;"></div>
<div class="t" style="left:1255.00px;top:1119.53px;font-size:28.75px;line-height:28.75px;color:#067647;font-weight:400;letter-spacing:0.739px;-webkit-text-stroke:0.58px #067647;"><span id="r2_pill">Pembayaran Terverifikasi</span></div>
<div class="t" style="left:1716.40px;top:1119.53px;font-size:28.75px;line-height:28.75px;color:#0a8a50;font-weight:400;letter-spacing:0.603px;-webkit-text-stroke:0.58px #0a8a50;"><span id="r2_spk">2.3-DIR/SPJ/268/XI/20232</span></div>
<div class="t" style="left:2168.00px;width:1200px;text-align:center;top:1119.53px;font-size:28.75px;line-height:28.75px;color:#181d27;font-weight:400;letter-spacing:0.000px;-webkit-text-stroke:0.58px #181d27;"><span id="r2_ptpn">I</span></div>
<div class="t" style="left:2911.50px;top:1119.53px;font-size:28.75px;line-height:28.75px;color:#181d27;font-weight:400;letter-spacing:1.131px;-webkit-text-stroke:0.58px #181d27;"><span id="r2_sppbj">SPPBJ/N000/2023/0420</span></div>
<div class="t" style="left:2868.00px;width:1200px;text-align:center;top:1119.53px;font-size:28.75px;line-height:28.75px;color:#181d27;font-weight:400;letter-spacing:0.000px;-webkit-text-stroke:0.58px #181d27;"><span id="r2_keb">7</span></div>
<svg class="i" style="left:3684.00px;top:1110.00px;width:48.00px;height:48.00px;" viewBox="0 0 48 48" fill="none"><path d="M18.2 13.2 L18.9 10.6 Q19.4 9.1 21 9.1 L27 9.1 Q28.6 9.1 29.2 10.6 L30 13.2" stroke="#d92d20" stroke-width="2.5" stroke-linejoin="round" stroke-linecap="round"/><path d="M14 13.9 L34 13.9 Q36.6 14 36 16.6 Q35.5 18.6 34 19.8 M14 13.9 Q11.4 14 12 16.6 Q12.5 18.6 14 19.8" stroke="#d92d20" stroke-width="2.5" stroke-linecap="round" stroke-linejoin="round"/><path d="M14.2 19.8 L14.6 33 Q15 38.4 20.2 38.5 L27.8 38.5 Q33 38.4 33.4 33 L33.8 19.8" stroke="#d92d20" stroke-width="2.5" stroke-linecap="round" stroke-linejoin="round"/><path d="M20.8 21.2 L21 31.3 M27.1 21.2 L26.9 31.3" stroke="#d92d20" stroke-width="2.5" stroke-linecap="round"/></svg>
<div class="b" style="left:686.00px;top:1288.50px;width:3120.00px;height:2.00px;background:#e5e5ea;"></div>
<div class="b" style="left:720.00px;top:1222.00px;width:32.00px;height:32.00px;background:#fff;border:2px solid #e1e2e6;border-radius:8px;"></div>
<div class="t" style="left:240.00px;width:1200px;text-align:center;top:1223.53px;font-size:28.75px;line-height:28.75px;color:#181d27;font-weight:400;letter-spacing:0.000px;-webkit-text-stroke:0.58px #181d27;"><span id="r3_num">4</span></div>
<div class="t" style="left:914.50px;top:1223.53px;font-size:28.75px;line-height:28.75px;color:#c89b3c;font-weight:400;letter-spacing:0.460px;-webkit-text-stroke:0.58px #c89b3c;"><span id="r3_st">In Progress</span></div>
<div class="b" style="left:1236.50px;top:1214.50px;width:370.80px;height:47.00px;background:#fffaeb;border:2px solid #fedf89;border-radius:24px;"></div>
<div class="t" style="left:1257.00px;top:1223.53px;font-size:28.75px;line-height:28.75px;color:#b54708;font-weight:400;letter-spacing:0.207px;-webkit-text-stroke:0.58px #b54708;"><span id="r3_pill">Analisis Layak Pakai (LP)</span></div>
<div class="t" style="left:1716.40px;top:1223.53px;font-size:28.75px;line-height:28.75px;color:#0a8a50;font-weight:400;letter-spacing:0.603px;-webkit-text-stroke:0.58px #0a8a50;"><span id="r3_spk">2.3-DIR/SPJ/267/XI/20232</span></div>
<div class="t" style="left:2168.00px;width:1200px;text-align:center;top:1223.53px;font-size:28.75px;line-height:28.75px;color:#181d27;font-weight:400;letter-spacing:0.000px;-webkit-text-stroke:0.58px #181d27;"><span id="r3_ptpn">I</span></div>
<div class="t" style="left:2911.50px;top:1223.53px;font-size:28.75px;line-height:28.75px;color:#181d27;font-weight:400;letter-spacing:1.184px;-webkit-text-stroke:0.58px #181d27;"><span id="r3_sppbj">SPPBJ/N000/2023/0419</span></div>
<div class="t" style="left:2868.00px;width:1200px;text-align:center;top:1223.53px;font-size:28.75px;line-height:28.75px;color:#181d27;font-weight:400;letter-spacing:0.000px;-webkit-text-stroke:0.58px #181d27;"><span id="r3_keb">4</span></div>
<svg class="i" style="left:3684.00px;top:1214.00px;width:48.00px;height:48.00px;" viewBox="0 0 48 48" fill="none"><path d="M18.2 13.2 L18.9 10.6 Q19.4 9.1 21 9.1 L27 9.1 Q28.6 9.1 29.2 10.6 L30 13.2" stroke="#d92d20" stroke-width="2.5" stroke-linejoin="round" stroke-linecap="round"/><path d="M14 13.9 L34 13.9 Q36.6 14 36 16.6 Q35.5 18.6 34 19.8 M14 13.9 Q11.4 14 12 16.6 Q12.5 18.6 14 19.8" stroke="#d92d20" stroke-width="2.5" stroke-linecap="round" stroke-linejoin="round"/><path d="M14.2 19.8 L14.6 33 Q15 38.4 20.2 38.5 L27.8 38.5 Q33 38.4 33.4 33 L33.8 19.8" stroke="#d92d20" stroke-width="2.5" stroke-linecap="round" stroke-linejoin="round"/><path d="M20.8 21.2 L21 31.3 M27.1 21.2 L26.9 31.3" stroke="#d92d20" stroke-width="2.5" stroke-linecap="round"/></svg>
<div class="b" style="left:686.00px;top:1392.50px;width:3120.00px;height:2.00px;background:#e5e5ea;"></div>
<div class="b" style="left:720.00px;top:1326.00px;width:32.00px;height:32.00px;background:#fff;border:2px solid #e1e2e6;border-radius:8px;"></div>
<div class="t" style="left:240.00px;width:1200px;text-align:center;top:1327.53px;font-size:28.75px;line-height:28.75px;color:#181d27;font-weight:400;letter-spacing:0.000px;-webkit-text-stroke:0.58px #181d27;"><span id="r4_num">5</span></div>
<div class="t" style="left:914.50px;top:1327.53px;font-size:28.75px;line-height:28.75px;color:#c89b3c;font-weight:400;letter-spacing:0.460px;-webkit-text-stroke:0.58px #c89b3c;"><span id="r4_st">In Progress</span></div>
<div class="b" style="left:1236.50px;top:1318.50px;width:370.80px;height:47.00px;background:#fffaeb;border:2px solid #fedf89;border-radius:24px;"></div>
<div class="t" style="left:1257.00px;top:1327.53px;font-size:28.75px;line-height:28.75px;color:#b54708;font-weight:400;letter-spacing:0.207px;-webkit-text-stroke:0.58px #b54708;"><span id="r4_pill">Analisis Layak Pakai (LP)</span></div>
<div class="t" style="left:1716.40px;top:1327.53px;font-size:28.75px;line-height:28.75px;color:#0a8a50;font-weight:400;letter-spacing:0.603px;-webkit-text-stroke:0.58px #0a8a50;"><span id="r4_spk">2.3-DIR/SPJ/266/XI/20232</span></div>
<div class="t" style="left:2166.50px;width:1200px;text-align:center;top:1327.53px;font-size:28.75px;line-height:28.75px;color:#181d27;font-weight:400;letter-spacing:0.000px;-webkit-text-stroke:0.58px #181d27;"><span id="r4_ptpn">IV</span></div>
<div class="t" style="left:2911.50px;top:1327.53px;font-size:28.75px;line-height:28.75px;color:#181d27;font-weight:400;letter-spacing:1.184px;-webkit-text-stroke:0.58px #181d27;"><span id="r4_sppbj">SPPBJ/N000/2023/0419</span></div>
<div class="t" style="left:2868.00px;width:1200px;text-align:center;top:1327.53px;font-size:28.75px;line-height:28.75px;color:#181d27;font-weight:400;letter-spacing:0.000px;-webkit-text-stroke:0.58px #181d27;"><span id="r4_keb">4</span></div>
<svg class="i" style="left:3684.00px;top:1318.00px;width:48.00px;height:48.00px;" viewBox="0 0 48 48" fill="none"><path d="M18.2 13.2 L18.9 10.6 Q19.4 9.1 21 9.1 L27 9.1 Q28.6 9.1 29.2 10.6 L30 13.2" stroke="#d92d20" stroke-width="2.5" stroke-linejoin="round" stroke-linecap="round"/><path d="M14 13.9 L34 13.9 Q36.6 14 36 16.6 Q35.5 18.6 34 19.8 M14 13.9 Q11.4 14 12 16.6 Q12.5 18.6 14 19.8" stroke="#d92d20" stroke-width="2.5" stroke-linecap="round" stroke-linejoin="round"/><path d="M14.2 19.8 L14.6 33 Q15 38.4 20.2 38.5 L27.8 38.5 Q33 38.4 33.4 33 L33.8 19.8" stroke="#d92d20" stroke-width="2.5" stroke-linecap="round" stroke-linejoin="round"/><path d="M20.8 21.2 L21 31.3 M27.1 21.2 L26.9 31.3" stroke="#d92d20" stroke-width="2.5" stroke-linecap="round"/></svg>
<div class="b" style="left:686.00px;top:1496.50px;width:3120.00px;height:2.00px;background:#e5e5ea;"></div>
<div class="b" style="left:720.00px;top:1430.00px;width:32.00px;height:32.00px;background:#fff;border:2px solid #e1e2e6;border-radius:8px;"></div>
<div class="t" style="left:239.50px;width:1200px;text-align:center;top:1431.53px;font-size:28.75px;line-height:28.75px;color:#181d27;font-weight:400;letter-spacing:0.000px;-webkit-text-stroke:0.58px #181d27;"><span id="r5_num">6</span></div>
<div class="t" style="left:915.50px;top:1431.53px;font-size:28.75px;line-height:28.75px;color:#80848d;font-weight:400;letter-spacing:1.025px;-webkit-text-stroke:0.58px #80848d;"><span id="r5_st">Completed</span></div>
<div class="b" style="left:1236.50px;top:1422.50px;width:377.00px;height:47.00px;background:#ecfdf3;border:2px solid #abefc6;border-radius:24px;"></div>
<div class="t" style="left:1255.00px;top:1431.53px;font-size:28.75px;line-height:28.75px;color:#067647;font-weight:400;letter-spacing:0.739px;-webkit-text-stroke:0.58px #067647;"><span id="r5_pill">Pembayaran Terverifikasi</span></div>
<div class="t" style="left:1716.40px;top:1431.53px;font-size:28.75px;line-height:28.75px;color:#0a8a50;font-weight:400;letter-spacing:0.603px;-webkit-text-stroke:0.58px #0a8a50;"><span id="r5_spk">2.3-DIR/SPJ/265/XI/20232</span></div>
<div class="t" style="left:2168.00px;width:1200px;text-align:center;top:1431.53px;font-size:28.75px;line-height:28.75px;color:#181d27;font-weight:400;letter-spacing:0.000px;-webkit-text-stroke:0.58px #181d27;"><span id="r5_ptpn">II</span></div>
<div class="t" style="left:2911.50px;top:1431.53px;font-size:28.75px;line-height:28.75px;color:#181d27;font-weight:400;letter-spacing:1.184px;-webkit-text-stroke:0.58px #181d27;"><span id="r5_sppbj">SPPBJ/N000/2023/0419</span></div>
<div class="t" style="left:2867.50px;width:1200px;text-align:center;top:1431.53px;font-size:28.75px;line-height:28.75px;color:#181d27;font-weight:400;letter-spacing:0.000px;-webkit-text-stroke:0.58px #181d27;"><span id="r5_keb">6</span></div>
<svg class="i" style="left:3684.00px;top:1422.00px;width:48.00px;height:48.00px;" viewBox="0 0 48 48" fill="none"><path d="M18.2 13.2 L18.9 10.6 Q19.4 9.1 21 9.1 L27 9.1 Q28.6 9.1 29.2 10.6 L30 13.2" stroke="#d92d20" stroke-width="2.5" stroke-linejoin="round" stroke-linecap="round"/><path d="M14 13.9 L34 13.9 Q36.6 14 36 16.6 Q35.5 18.6 34 19.8 M14 13.9 Q11.4 14 12 16.6 Q12.5 18.6 14 19.8" stroke="#d92d20" stroke-width="2.5" stroke-linecap="round" stroke-linejoin="round"/><path d="M14.2 19.8 L14.6 33 Q15 38.4 20.2 38.5 L27.8 38.5 Q33 38.4 33.4 33 L33.8 19.8" stroke="#d92d20" stroke-width="2.5" stroke-linecap="round" stroke-linejoin="round"/><path d="M20.8 21.2 L21 31.3 M27.1 21.2 L26.9 31.3" stroke="#d92d20" stroke-width="2.5" stroke-linecap="round"/></svg>
<div class="b" style="left:686.00px;top:1600.50px;width:3120.00px;height:2.00px;background:#e5e5ea;"></div>
<div class="b" style="left:720.00px;top:1534.00px;width:32.00px;height:32.00px;background:#fff;border:2px solid #e1e2e6;border-radius:8px;"></div>
<div class="t" style="left:240.00px;width:1200px;text-align:center;top:1535.53px;font-size:28.75px;line-height:28.75px;color:#181d27;font-weight:400;letter-spacing:0.000px;-webkit-text-stroke:0.58px #181d27;"><span id="r6_num">7</span></div>
<div class="t" style="left:914.50px;top:1535.53px;font-size:28.75px;line-height:28.75px;color:#c89b3c;font-weight:400;letter-spacing:0.460px;-webkit-text-stroke:0.58px #c89b3c;"><span id="r6_st">In Progress</span></div>
<div class="b" style="left:1236.50px;top:1526.50px;width:370.80px;height:47.00px;background:#fffaeb;border:2px solid #fedf89;border-radius:24px;"></div>
<div class="t" style="left:1257.00px;top:1535.53px;font-size:28.75px;line-height:28.75px;color:#b54708;font-weight:400;letter-spacing:0.207px;-webkit-text-stroke:0.58px #b54708;"><span id="r6_pill">Analisis Layak Pakai (LP)</span></div>
<div class="t" style="left:1716.40px;top:1535.53px;font-size:28.75px;line-height:28.75px;color:#0a8a50;font-weight:400;letter-spacing:0.603px;-webkit-text-stroke:0.58px #0a8a50;"><span id="r6_spk">2.3-DIR/SPJ/264/XI/20232</span></div>
<div class="t" style="left:2168.00px;width:1200px;text-align:center;top:1535.53px;font-size:28.75px;line-height:28.75px;color:#181d27;font-weight:400;letter-spacing:0.000px;-webkit-text-stroke:0.58px #181d27;"><span id="r6_ptpn">I</span></div>
<div class="t" style="left:2911.50px;top:1535.53px;font-size:28.75px;line-height:28.75px;color:#181d27;font-weight:400;letter-spacing:1.184px;-webkit-text-stroke:0.58px #181d27;"><span id="r6_sppbj">SPPBJ/N000/2023/0419</span></div>
<div class="t" style="left:2868.00px;width:1200px;text-align:center;top:1535.53px;font-size:28.75px;line-height:28.75px;color:#181d27;font-weight:400;letter-spacing:0.000px;-webkit-text-stroke:0.58px #181d27;"><span id="r6_keb">4</span></div>
<svg class="i" style="left:3684.00px;top:1526.00px;width:48.00px;height:48.00px;" viewBox="0 0 48 48" fill="none"><path d="M18.2 13.2 L18.9 10.6 Q19.4 9.1 21 9.1 L27 9.1 Q28.6 9.1 29.2 10.6 L30 13.2" stroke="#d92d20" stroke-width="2.5" stroke-linejoin="round" stroke-linecap="round"/><path d="M14 13.9 L34 13.9 Q36.6 14 36 16.6 Q35.5 18.6 34 19.8 M14 13.9 Q11.4 14 12 16.6 Q12.5 18.6 14 19.8" stroke="#d92d20" stroke-width="2.5" stroke-linecap="round" stroke-linejoin="round"/><path d="M14.2 19.8 L14.6 33 Q15 38.4 20.2 38.5 L27.8 38.5 Q33 38.4 33.4 33 L33.8 19.8" stroke="#d92d20" stroke-width="2.5" stroke-linecap="round" stroke-linejoin="round"/><path d="M20.8 21.2 L21 31.3 M27.1 21.2 L26.9 31.3" stroke="#d92d20" stroke-width="2.5" stroke-linecap="round"/></svg>
<div class="b" style="left:686.00px;top:1704.50px;width:3120.00px;height:2.00px;background:#e5e5ea;"></div>
<div class="b" style="left:720.00px;top:1638.00px;width:32.00px;height:32.00px;background:#fff;border:2px solid #e1e2e6;border-radius:8px;"></div>
<div class="t" style="left:240.00px;width:1200px;text-align:center;top:1639.53px;font-size:28.75px;line-height:28.75px;color:#181d27;font-weight:400;letter-spacing:0.000px;-webkit-text-stroke:0.58px #181d27;"><span id="r7_num">8</span></div>
<div class="t" style="left:914.50px;top:1639.53px;font-size:28.75px;line-height:28.75px;color:#c89b3c;font-weight:400;letter-spacing:0.460px;-webkit-text-stroke:0.58px #c89b3c;"><span id="r7_st">In Progress</span></div>
<div class="b" style="left:1236.50px;top:1630.50px;width:370.80px;height:47.00px;background:#fffaeb;border:2px solid #fedf89;border-radius:24px;"></div>
<div class="t" style="left:1257.00px;top:1639.53px;font-size:28.75px;line-height:28.75px;color:#b54708;font-weight:400;letter-spacing:0.207px;-webkit-text-stroke:0.58px #b54708;"><span id="r7_pill">Analisis Layak Pakai (LP)</span></div>
<div class="t" style="left:1716.40px;top:1639.53px;font-size:28.75px;line-height:28.75px;color:#0a8a50;font-weight:400;letter-spacing:0.603px;-webkit-text-stroke:0.58px #0a8a50;"><span id="r7_spk">2.3-DIR/SPJ/263/XI/20232</span></div>
<div class="t" style="left:2168.00px;width:1200px;text-align:center;top:1639.53px;font-size:28.75px;line-height:28.75px;color:#181d27;font-weight:400;letter-spacing:0.000px;-webkit-text-stroke:0.58px #181d27;"><span id="r7_ptpn">II</span></div>
<div class="t" style="left:2911.50px;top:1639.53px;font-size:28.75px;line-height:28.75px;color:#181d27;font-weight:400;letter-spacing:1.183px;-webkit-text-stroke:0.58px #181d27;"><span id="r7_sppbj">SPPBJ/N000/2023/0418</span></div>
<div class="t" style="left:2868.00px;width:1200px;text-align:center;top:1639.53px;font-size:28.75px;line-height:28.75px;color:#181d27;font-weight:400;letter-spacing:0.000px;-webkit-text-stroke:0.58px #181d27;"><span id="r7_keb">7</span></div>
<svg class="i" style="left:3684.00px;top:1630.00px;width:48.00px;height:48.00px;" viewBox="0 0 48 48" fill="none"><path d="M18.2 13.2 L18.9 10.6 Q19.4 9.1 21 9.1 L27 9.1 Q28.6 9.1 29.2 10.6 L30 13.2" stroke="#d92d20" stroke-width="2.5" stroke-linejoin="round" stroke-linecap="round"/><path d="M14 13.9 L34 13.9 Q36.6 14 36 16.6 Q35.5 18.6 34 19.8 M14 13.9 Q11.4 14 12 16.6 Q12.5 18.6 14 19.8" stroke="#d92d20" stroke-width="2.5" stroke-linecap="round" stroke-linejoin="round"/><path d="M14.2 19.8 L14.6 33 Q15 38.4 20.2 38.5 L27.8 38.5 Q33 38.4 33.4 33 L33.8 19.8" stroke="#d92d20" stroke-width="2.5" stroke-linecap="round" stroke-linejoin="round"/><path d="M20.8 21.2 L21 31.3 M27.1 21.2 L26.9 31.3" stroke="#d92d20" stroke-width="2.5" stroke-linecap="round"/></svg>
<div class="b" style="left:686.00px;top:1808.50px;width:3120.00px;height:2.00px;background:#e5e5ea;"></div>
<div class="b" style="left:720.00px;top:1742.00px;width:32.00px;height:32.00px;background:#fff;border:2px solid #e1e2e6;border-radius:8px;"></div>
<div class="t" style="left:239.50px;width:1200px;text-align:center;top:1743.53px;font-size:28.75px;line-height:28.75px;color:#181d27;font-weight:400;letter-spacing:0.000px;-webkit-text-stroke:0.58px #181d27;"><span id="r8_num">9</span></div>
<div class="t" style="left:914.50px;top:1743.53px;font-size:28.75px;line-height:28.75px;color:#c89b3c;font-weight:400;letter-spacing:0.460px;-webkit-text-stroke:0.58px #c89b3c;"><span id="r8_st">In Progress</span></div>
<div class="b" style="left:1236.50px;top:1734.50px;width:400.50px;height:47.00px;background:#eef4ff;border:2px solid #c7d7fe;border-radius:24px;"></div>
<div class="t" style="left:1255.00px;top:1743.53px;font-size:28.75px;line-height:28.75px;color:#3538cd;font-weight:400;letter-spacing:0.240px;-webkit-text-stroke:0.58px #3538cd;"><span id="r8_pill">Pengisian Layak Bayar (LB)</span></div>
<div class="t" style="left:1716.40px;top:1743.53px;font-size:28.75px;line-height:28.75px;color:#0a8a50;font-weight:400;letter-spacing:0.603px;-webkit-text-stroke:0.58px #0a8a50;"><span id="r8_spk">2.3-DIR/SPJ/262/XI/20232</span></div>
<div class="t" style="left:2168.00px;width:1200px;text-align:center;top:1743.53px;font-size:28.75px;line-height:28.75px;color:#181d27;font-weight:400;letter-spacing:0.000px;-webkit-text-stroke:0.58px #181d27;"><span id="r8_ptpn">I</span></div>
<div class="t" style="left:2911.50px;top:1743.53px;font-size:28.75px;line-height:28.75px;color:#181d27;font-weight:400;letter-spacing:1.183px;-webkit-text-stroke:0.58px #181d27;"><span id="r8_sppbj">SPPBJ/N000/2023/0418</span></div>
<div class="t" style="left:2868.00px;width:1200px;text-align:center;top:1743.53px;font-size:28.75px;line-height:28.75px;color:#181d27;font-weight:400;letter-spacing:0.000px;-webkit-text-stroke:0.58px #181d27;"><span id="r8_keb">7</span></div>
<svg class="i" style="left:3684.00px;top:1734.00px;width:48.00px;height:48.00px;" viewBox="0 0 48 48" fill="none"><path d="M18.2 13.2 L18.9 10.6 Q19.4 9.1 21 9.1 L27 9.1 Q28.6 9.1 29.2 10.6 L30 13.2" stroke="#d92d20" stroke-width="2.5" stroke-linejoin="round" stroke-linecap="round"/><path d="M14 13.9 L34 13.9 Q36.6 14 36 16.6 Q35.5 18.6 34 19.8 M14 13.9 Q11.4 14 12 16.6 Q12.5 18.6 14 19.8" stroke="#d92d20" stroke-width="2.5" stroke-linecap="round" stroke-linejoin="round"/><path d="M14.2 19.8 L14.6 33 Q15 38.4 20.2 38.5 L27.8 38.5 Q33 38.4 33.4 33 L33.8 19.8" stroke="#d92d20" stroke-width="2.5" stroke-linecap="round" stroke-linejoin="round"/><path d="M20.8 21.2 L21 31.3 M27.1 21.2 L26.9 31.3" stroke="#d92d20" stroke-width="2.5" stroke-linecap="round"/></svg>
<div class="b" style="left:720.00px;top:1846.00px;width:32.00px;height:32.00px;background:#fff;border:2px solid #e1e2e6;border-radius:8px;"></div>
<div class="t" style="left:239.00px;width:1200px;text-align:center;top:1847.53px;font-size:28.75px;line-height:28.75px;color:#181d27;font-weight:400;letter-spacing:0.000px;-webkit-text-stroke:0.58px #181d27;"><span id="r9_num">10</span></div>
<div class="t" style="left:914.50px;top:1847.53px;font-size:28.75px;line-height:28.75px;color:#c89b3c;font-weight:400;letter-spacing:0.460px;-webkit-text-stroke:0.58px #c89b3c;"><span id="r9_st">In Progress</span></div>
<div class="b" style="left:1236.50px;top:1838.50px;width:400.50px;height:47.00px;background:#eef4ff;border:2px solid #c7d7fe;border-radius:24px;"></div>
<div class="t" style="left:1255.00px;top:1847.53px;font-size:28.75px;line-height:28.75px;color:#3538cd;font-weight:400;letter-spacing:0.240px;-webkit-text-stroke:0.58px #3538cd;"><span id="r9_pill">Pengisian Layak Bayar (LB)</span></div>
<div class="t" style="left:1716.40px;top:1847.53px;font-size:28.75px;line-height:28.75px;color:#0a8a50;font-weight:400;letter-spacing:0.603px;-webkit-text-stroke:0.58px #0a8a50;"><span id="r9_spk">2.3-DIR/SPJ/261/XI/20232</span></div>
<div class="t" style="left:2168.00px;width:1200px;text-align:center;top:1847.53px;font-size:28.75px;line-height:28.75px;color:#181d27;font-weight:400;letter-spacing:0.000px;-webkit-text-stroke:0.58px #181d27;"><span id="r9_ptpn">V</span></div>
<div class="t" style="left:2911.50px;top:1847.53px;font-size:28.75px;line-height:28.75px;color:#181d27;font-weight:400;letter-spacing:1.183px;-webkit-text-stroke:0.58px #181d27;"><span id="r9_sppbj">SPPBJ/N000/2023/0418</span></div>
<div class="t" style="left:2868.00px;width:1200px;text-align:center;top:1847.53px;font-size:28.75px;line-height:28.75px;color:#181d27;font-weight:400;letter-spacing:0.000px;-webkit-text-stroke:0.58px #181d27;"><span id="r9_keb">7</span></div>
<svg class="i" style="left:3684.00px;top:1838.00px;width:48.00px;height:48.00px;" viewBox="0 0 48 48" fill="none"><path d="M18.2 13.2 L18.9 10.6 Q19.4 9.1 21 9.1 L27 9.1 Q28.6 9.1 29.2 10.6 L30 13.2" stroke="#d92d20" stroke-width="2.5" stroke-linejoin="round" stroke-linecap="round"/><path d="M14 13.9 L34 13.9 Q36.6 14 36 16.6 Q35.5 18.6 34 19.8 M14 13.9 Q11.4 14 12 16.6 Q12.5 18.6 14 19.8" stroke="#d92d20" stroke-width="2.5" stroke-linecap="round" stroke-linejoin="round"/><path d="M14.2 19.8 L14.6 33 Q15 38.4 20.2 38.5 L27.8 38.5 Q33 38.4 33.4 33 L33.8 19.8" stroke="#d92d20" stroke-width="2.5" stroke-linecap="round" stroke-linejoin="round"/><path d="M20.8 21.2 L21 31.3 M27.1 21.2 L26.9 31.3" stroke="#d92d20" stroke-width="2.5" stroke-linecap="round"/></svg>
<div class="t" style="left:722.00px;top:1964.60px;font-size:32.63px;line-height:32.63px;color:#181d27;font-weight:400;letter-spacing:0.816px;-webkit-text-stroke:0.82px #181d27;"><span id="pag_info">1 sampai 20 dari 200 item</span></div>
<div class="b" style="left:2713.00px;top:1931.00px;width:705.50px;height:97.60px;background:#fff;border:2px solid #e5e5ea;border-radius:49px;"></div>
<svg class="i" style="left:2730.00px;top:1950.00px;width:60.00px;height:60.00px;" viewBox="0 0 60 60" fill="none"><path d="M37.7 29.8 H14.8 M26 18 L14.5 29.8 L26 41.6" stroke="#a4a7ae" stroke-width="2.6" stroke-linecap="round" stroke-linejoin="round"/></svg>
<svg class="i" style="left:2795.80px;top:1944.00px;width:72.00px;height:72.00px;" viewBox="0 0 72 72" fill="none"><circle cx="36" cy="36" r="36" fill="#088a52"/></svg>
<div class="t" style="left:2231.50px;width:1200px;text-align:center;top:1965.53px;font-size:28.75px;line-height:28.75px;color:#fff;font-weight:400;letter-spacing:0.000px;-webkit-text-stroke:0.58px #fff;"><span id="pg_1">1</span></div>
<div class="t" style="left:2309.90px;width:1200px;text-align:center;top:1965.64px;font-size:29.08px;line-height:29.08px;color:#717680;font-weight:400;letter-spacing:0.000px;-webkit-text-stroke:0.35px #717680;"><span id="pg_2">2</span></div>
<div class="t" style="left:2387.00px;width:1200px;text-align:center;top:1965.64px;font-size:29.08px;line-height:29.08px;color:#717680;font-weight:400;letter-spacing:0.000px;-webkit-text-stroke:0.35px #717680;"><span id="pg_3">3</span></div>
<div class="t" style="left:2466.00px;width:1200px;text-align:center;top:1965.64px;font-size:29.08px;line-height:29.08px;color:#717680;font-weight:400;letter-spacing:0.000px;-webkit-text-stroke:0.35px #717680;"><span id="pg_ddd">...</span></div>
<div class="t" style="left:2543.00px;width:1200px;text-align:center;top:1965.64px;font-size:29.08px;line-height:29.08px;color:#717680;font-weight:400;letter-spacing:0.000px;-webkit-text-stroke:0.35px #717680;"><span id="pg_18">18</span></div>
<div class="t" style="left:2621.00px;width:1200px;text-align:center;top:1965.64px;font-size:29.08px;line-height:29.08px;color:#717680;font-weight:400;letter-spacing:0.000px;-webkit-text-stroke:0.35px #717680;"><span id="pg_19">19</span></div>
<div class="t" style="left:2698.70px;width:1200px;text-align:center;top:1965.64px;font-size:29.08px;line-height:29.08px;color:#717680;font-weight:400;letter-spacing:0.000px;-webkit-text-stroke:0.35px #717680;"><span id="pg_20">20</span></div>
<svg class="i" style="left:3346.00px;top:1950.00px;width:60.00px;height:60.00px;" viewBox="0 0 60 60" fill="none"><path d="M18.3 29.8 H41.5 M30 18.2 L41.8 29.8 L30 41.5" stroke="#181d27" stroke-width="2.7" stroke-linecap="round" stroke-linejoin="round"/></svg>
<div class="t" style="left:3459.10px;top:1963.89px;font-size:32.86px;line-height:32.86px;color:#181d27;font-weight:400;letter-spacing:0.000px;-webkit-text-stroke:0.66px #181d27;transform:scaleX(1.0349);transform-origin:0 0;"><span id="menuju">Menuju halaman</span></div>
<div class="b" style="left:3737.00px;top:1944.40px;width:70.00px;height:70.60px;background:#fff;border:2px solid #e5e5ea;border-radius:16px;"></div>
<div class="b" style="left:3823.00px;top:0.00px;width:17.00px;height:158.00px;background:#fafafa;"></div>
<div class="b" style="left:0.00px;top:0.00px;width:37.00px;height:37.00px;background:radial-gradient(circle at 37px 37px, rgba(250,250,250,0) 36px, #fafafa 37.5px);"></div>
<div class="b" style="left:3803.00px;top:0.00px;width:37.00px;height:37.00px;background:radial-gradient(circle at 0px 37px, rgba(250,250,250,0) 36px, #fafafa 37.5px);"></div>
<div class="b" style="left:0.00px;top:2123.00px;width:37.00px;height:37.00px;background:radial-gradient(circle at 37px 0px, rgba(250,250,250,0) 36px, #fafafa 37.5px);"></div>
<div class="b" style="left:3803.00px;top:2123.00px;width:37.00px;height:37.00px;background:radial-gradient(circle at 0px 0px, rgba(250,250,250,0) 36px, #fafafa 37.5px);"></div>
</body></html>
